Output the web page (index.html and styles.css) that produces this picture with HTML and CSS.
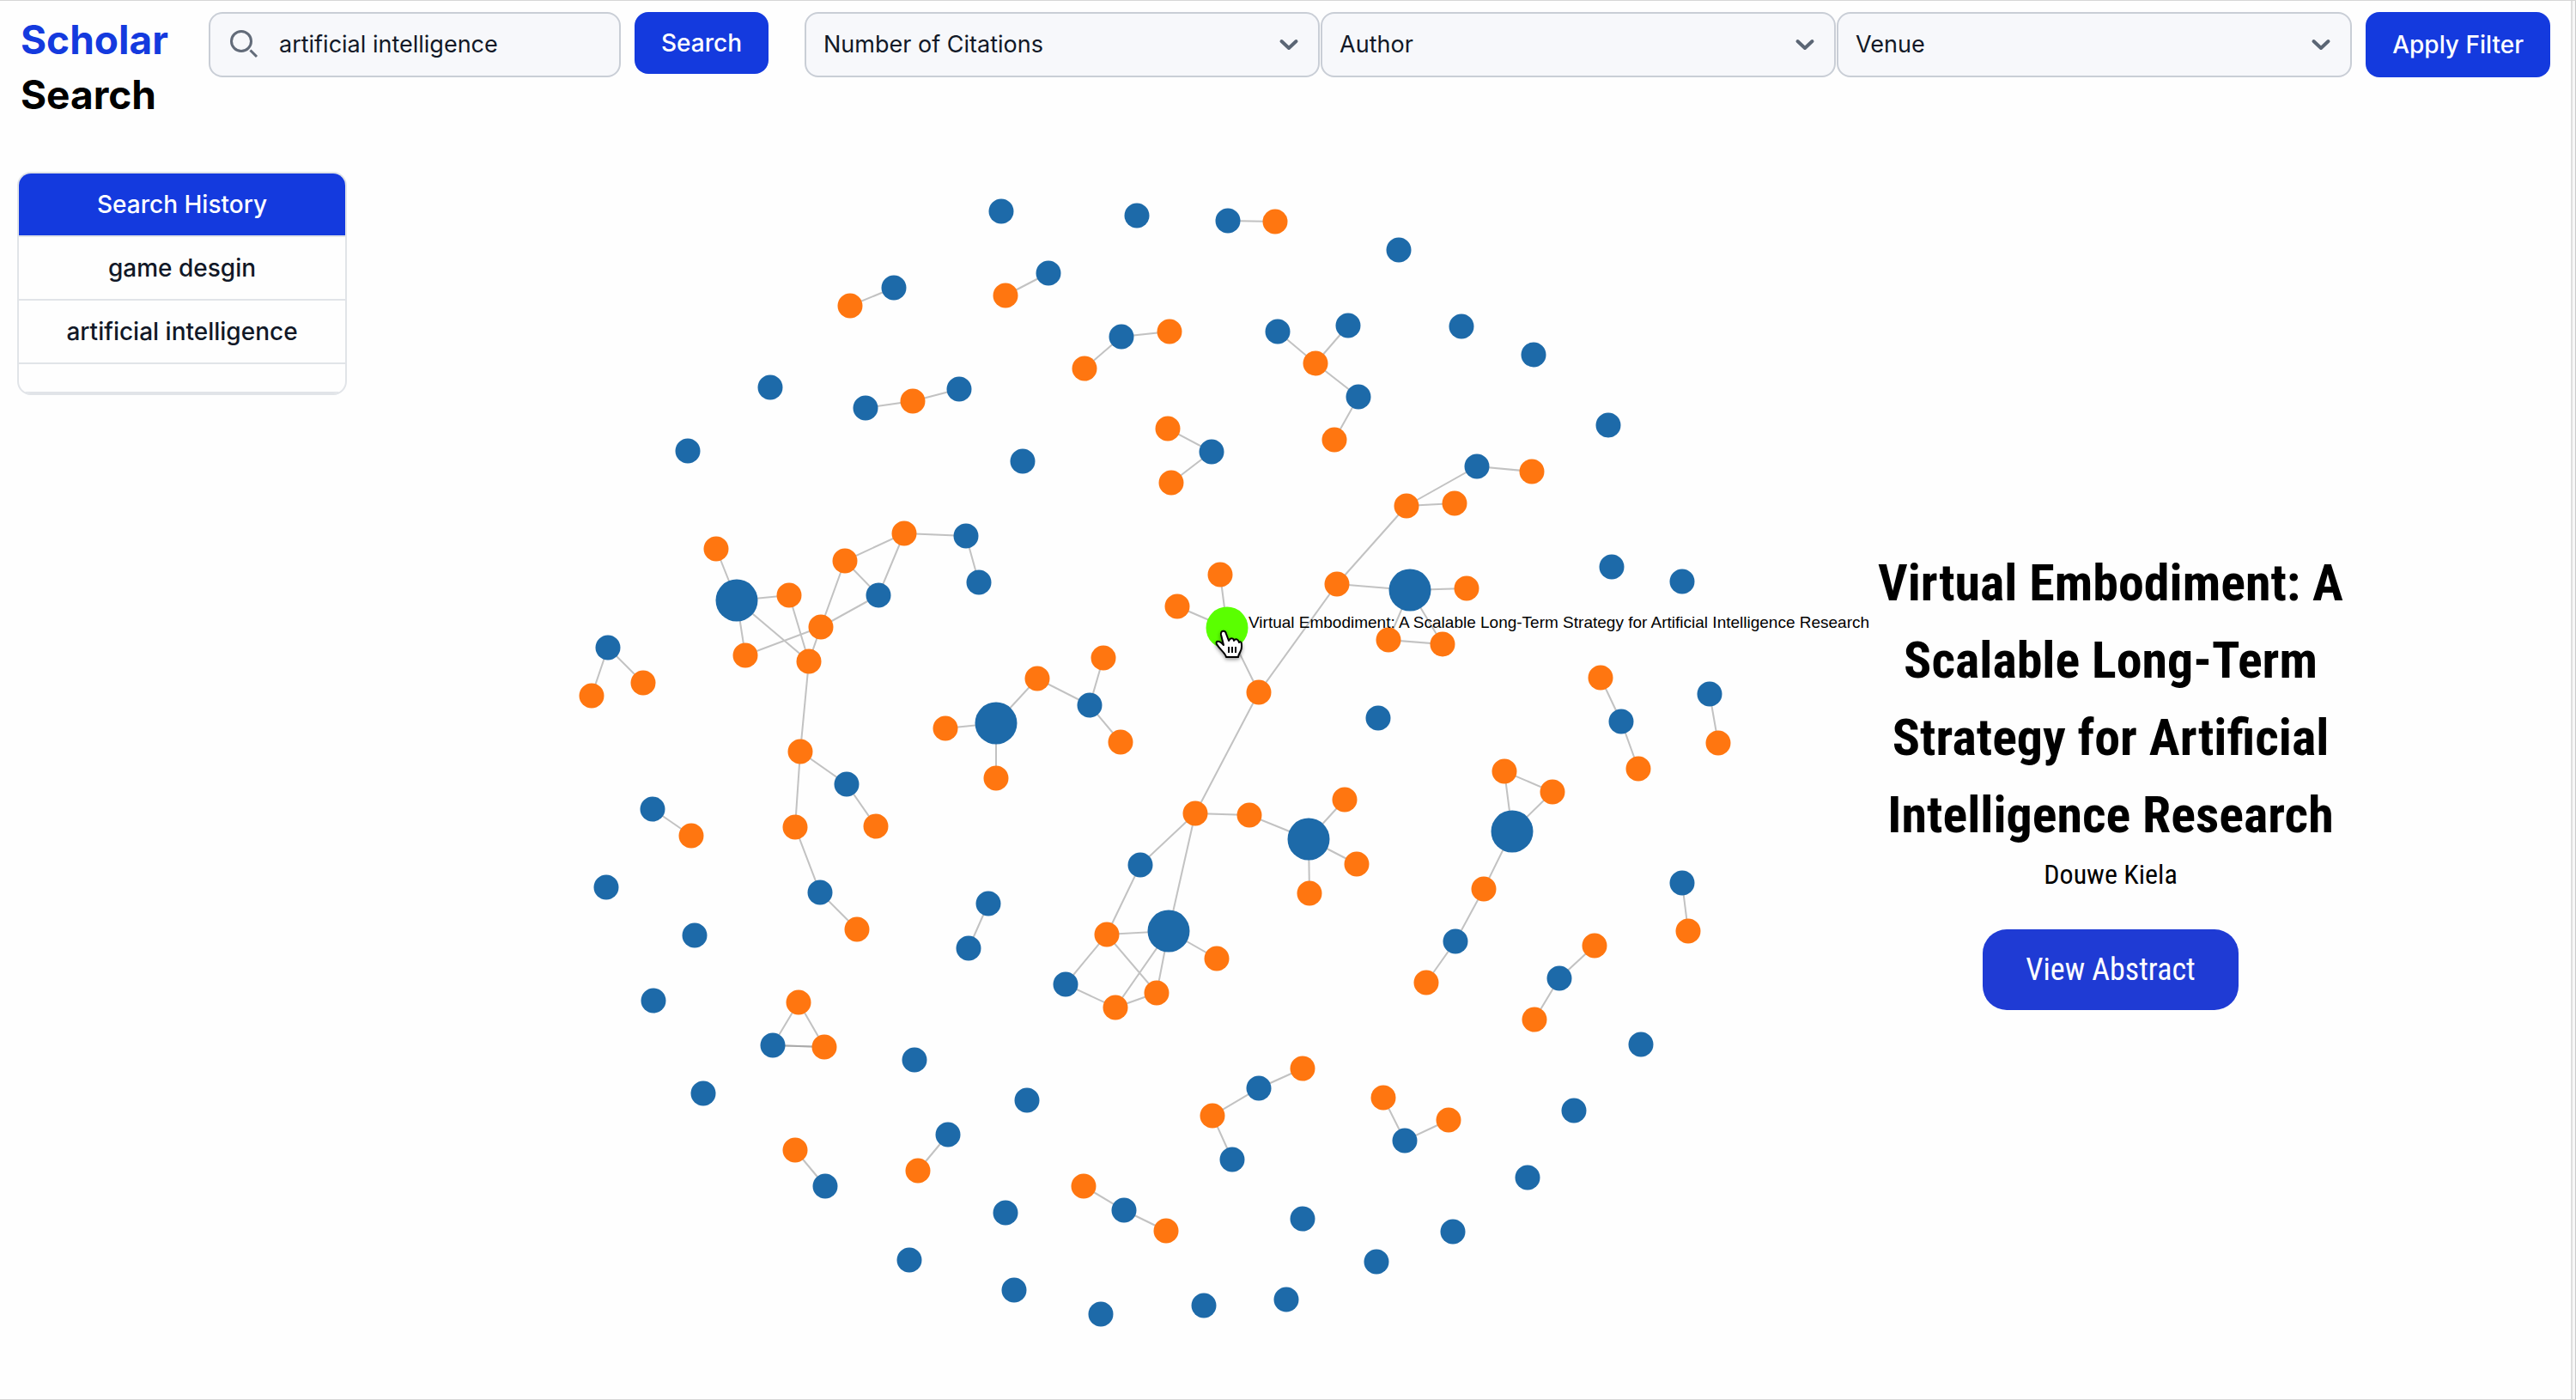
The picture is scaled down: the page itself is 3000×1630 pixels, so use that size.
FILE: index.html
```html
<!DOCTYPE html>
<html lang="en">
<head>
<meta charset="utf-8">
<title>Scholar Search</title>
<link rel="stylesheet" href="styles.css">
</head>
<body>
<div class="page">
  <header class="topbar">
    <h1 class="logo"><span class="logo-accent">Scholar</span> Search</h1>
    <form class="search">
      <div class="search-box">
        <svg class="search-icon" viewBox="0 0 40 40" aria-hidden="true"><circle cx="16" cy="16" r="11.5"/><path d="M26.500 26.500L34 34"/></svg>
        <input class="search-input" type="text" aria-label="Search papers" value="artificial intelligence">
      </div>
      <button class="btn" type="button">Search</button>
    </form>
    <form class="filters">
      <div class="filter-row">
        <div class="select-wrap">
          <select class="select" aria-label="Number of Citations"><option>Number of Citations</option></select>
          <svg class="chevron" viewBox="0 0 24 16" aria-hidden="true"><path d="M3.500 4L12 12L20.500 4"/></svg>
        </div>
        <div class="select-wrap">
          <select class="select" aria-label="Author"><option>Author</option></select>
          <svg class="chevron" viewBox="0 0 24 16" aria-hidden="true"><path d="M3.500 4L12 12L20.500 4"/></svg>
        </div>
        <div class="select-wrap">
          <select class="select" aria-label="Venue"><option>Venue</option></select>
          <svg class="chevron" viewBox="0 0 24 16" aria-hidden="true"><path d="M3.500 4L12 12L20.500 4"/></svg>
        </div>
      </div>
      <button class="btn btn-tall" type="button">Apply Filter</button>
    </form>
  </header>

  <main class="content">
    <aside class="history">
      <h2 class="history-title">Search History</h2>
      <button class="history-item" type="button">game desgin</button>
      <button class="history-item" type="button">artificial intelligence</button>
      <div class="history-empty"></div>
    </aside>

    <svg class="graph" viewBox="404 200 1777 1428" role="img" aria-label="Citation graph">
      <path class="link" d="M1430 257L1485 258M1221 318L1171 344M1041 335L990 356M1263 429L1306 392L1362 386M1488 386L1532 423L1570 379M1532 423L1582 462L1554 512M1008 475L1063 467L1117 453M1360 499L1411 526L1364 562"/>
      <path class="link" d="M834 639L858 699L919 693L942 770L858 699L868 763L956 730L984 653L1053 621L1125 624L1140 678M984 653L1023 693L1053 621M1023 693L956 730L942 770L932 875L986 913L1020 962M932 875L926 963L955 1039L998 1082"/>
      <path class="link" d="M1784 549L1720 543L1638 589L1694 586M1638 589L1557 680L1642 687L1708 685M1642 687L1617 745L1680 750L1642 687M1557 680L1466 806L1429 731L1421 669M1371 706L1429 731M1466 806L1392 947L1455 949L1524 977L1566 931M1580 1006L1524 977L1525 1040"/>
      <path class="link" d="M1392 947L1361 1084L1417 1116M1392 947L1328 1007L1289 1088L1361 1084L1299 1173L1241 1146L1289 1088L1347 1156L1361 1084M1299 1173L1347 1156"/>
      <path class="link" d="M689 810L708 754L749 795M760 942L805 973M1101 848L1160 842L1160 906M1160 842L1208 790L1269 821L1285 766M1269 821L1305 864M1151 1052L1128 1104M900 1217L930 1167L960 1219ZM926 1339L961 1381M1104 1321L1069 1363M1262 1381L1309 1409L1358 1433"/>
      <path class="link" d="M1517 1244L1466 1267L1412 1299L1435 1350M1611 1278L1636 1328L1687 1304M1864 789L1888 840L1908 895M1991 808L2001 865M1761 968L1752 898L1808 922ZL1728 1035L1695 1096L1661 1144M1959 1028L1966 1084M1857 1101L1816 1139L1787 1187"/>
      <path class="link" d="M900 1217L960 1219"/>
      <g class="paper">
        <circle cx="1166" cy="246" r="14.500"/><circle cx="1324" cy="251" r="14.500"/><circle cx="1430" cy="257" r="14.500"/><circle cx="1629" cy="291" r="14.500"/>
        <circle cx="1221" cy="318" r="14.500"/><circle cx="1041" cy="335" r="14.500"/><circle cx="1306" cy="392" r="14.500"/><circle cx="1488" cy="386" r="14.500"/>
        <circle cx="1570" cy="379" r="14.500"/><circle cx="1582" cy="462" r="14.500"/><circle cx="1702" cy="380" r="14.500"/><circle cx="1786" cy="413" r="14.500"/>
        <circle cx="1008" cy="475" r="14.500"/><circle cx="1117" cy="453" r="14.500"/><circle cx="897" cy="451" r="14.500"/><circle cx="1411" cy="526" r="14.500"/>
        <circle cx="1873" cy="495" r="14.500"/><circle cx="1720" cy="543" r="14.500"/><circle cx="1877" cy="660" r="14.500"/><circle cx="1959" cy="677" r="14.500"/>
        <circle cx="1605" cy="836" r="14.500"/><circle cx="1888" cy="840" r="14.500"/><circle cx="1991" cy="808" r="14.500"/><circle cx="1695" cy="1096" r="14.500"/>
        <circle cx="1959" cy="1028" r="14.500"/><circle cx="1816" cy="1139" r="14.500"/><circle cx="1911" cy="1216" r="14.500"/><circle cx="1833" cy="1293" r="14.500"/>
        <circle cx="1779" cy="1371" r="14.500"/><circle cx="1692" cy="1434" r="14.500"/><circle cx="1603" cy="1469" r="14.500"/><circle cx="1498" cy="1513" r="14.500"/>
        <circle cx="1402" cy="1520" r="14.500"/><circle cx="1517" cy="1419" r="14.500"/><circle cx="1466" cy="1267" r="14.500"/><circle cx="1435" cy="1350" r="14.500"/>
        <circle cx="1636" cy="1328" r="14.500"/><circle cx="801" cy="525" r="14.500"/><circle cx="1191" cy="537" r="14.500"/><circle cx="1125" cy="624" r="14.500"/>
        <circle cx="1140" cy="678" r="14.500"/><circle cx="1023" cy="693" r="14.500"/><circle cx="708" cy="754" r="14.500"/><circle cx="986" cy="913" r="14.500"/>
        <circle cx="955" cy="1039" r="14.500"/><circle cx="760" cy="942" r="14.500"/><circle cx="706" cy="1033" r="14.500"/><circle cx="809" cy="1089" r="14.500"/>
        <circle cx="1269" cy="821" r="14.500"/><circle cx="1151" cy="1052" r="14.500"/><circle cx="1128" cy="1104" r="14.500"/><circle cx="1328" cy="1007" r="14.500"/>
        <circle cx="1241" cy="1146" r="14.500"/><circle cx="761" cy="1165" r="14.500"/><circle cx="900" cy="1217" r="14.500"/><circle cx="819" cy="1273" r="14.500"/>
        <circle cx="1065" cy="1234" r="14.500"/><circle cx="1196" cy="1281" r="14.500"/><circle cx="1104" cy="1321" r="14.500"/><circle cx="961" cy="1381" r="14.500"/>
        <circle cx="1171" cy="1412" r="14.500"/><circle cx="1059" cy="1467" r="14.500"/><circle cx="1181" cy="1502" r="14.500"/><circle cx="1282" cy="1530" r="14.500"/>
        <circle cx="1309" cy="1409" r="14.500"/>
        <circle cx="858" cy="699" r="24.500"/><circle cx="1160" cy="842" r="24.500"/><circle cx="1361" cy="1084" r="24.500"/><circle cx="1524" cy="977" r="24.500"/>
        <circle cx="1642" cy="687" r="24.500"/><circle cx="1761" cy="968" r="24.500"/>
      </g>
      <g class="author-node">
        <circle cx="1485" cy="258" r="14.500"/><circle cx="1171" cy="344" r="14.500"/><circle cx="990" cy="356" r="14.500"/><circle cx="1362" cy="386" r="14.500"/>
        <circle cx="1263" cy="429" r="14.500"/><circle cx="1532" cy="423" r="14.500"/><circle cx="1063" cy="467" r="14.500"/><circle cx="1554" cy="512" r="14.500"/>
        <circle cx="1360" cy="499" r="14.500"/><circle cx="1364" cy="562" r="14.500"/><circle cx="1784" cy="549" r="14.500"/><circle cx="1638" cy="589" r="14.500"/>
        <circle cx="1694" cy="586" r="14.500"/><circle cx="1557" cy="680" r="14.500"/><circle cx="1708" cy="685" r="14.500"/><circle cx="1617" cy="745" r="14.500"/>
        <circle cx="1680" cy="750" r="14.500"/><circle cx="1421" cy="669" r="14.500"/><circle cx="1371" cy="706" r="14.500"/><circle cx="1466" cy="806" r="14.500"/>
        <circle cx="1864" cy="789" r="14.500"/><circle cx="1908" cy="895" r="14.500"/><circle cx="2001" cy="865" r="14.500"/><circle cx="1392" cy="947" r="14.500"/>
        <circle cx="1455" cy="949" r="14.500"/><circle cx="1566" cy="931" r="14.500"/><circle cx="1580" cy="1006" r="14.500"/><circle cx="1525" cy="1040" r="14.500"/>
        <circle cx="1417" cy="1116" r="14.500"/><circle cx="1752" cy="898" r="14.500"/><circle cx="1808" cy="922" r="14.500"/><circle cx="1728" cy="1035" r="14.500"/>
        <circle cx="1966" cy="1084" r="14.500"/><circle cx="1857" cy="1101" r="14.500"/><circle cx="1661" cy="1144" r="14.500"/><circle cx="1787" cy="1187" r="14.500"/>
        <circle cx="1517" cy="1244" r="14.500"/><circle cx="1412" cy="1299" r="14.500"/><circle cx="1611" cy="1278" r="14.500"/><circle cx="1687" cy="1304" r="14.500"/>
        <circle cx="1358" cy="1433" r="14.500"/><circle cx="1347" cy="1156" r="14.500"/><circle cx="834" cy="639" r="14.500"/><circle cx="919" cy="693" r="14.500"/>
        <circle cx="868" cy="763" r="14.500"/><circle cx="956" cy="730" r="14.500"/><circle cx="942" cy="770" r="14.500"/><circle cx="984" cy="653" r="14.500"/>
        <circle cx="1053" cy="621" r="14.500"/><circle cx="689" cy="810" r="14.500"/><circle cx="749" cy="795" r="14.500"/><circle cx="932" cy="875" r="14.500"/>
        <circle cx="1020" cy="962" r="14.500"/><circle cx="926" cy="963" r="14.500"/><circle cx="998" cy="1082" r="14.500"/><circle cx="805" cy="973" r="14.500"/>
        <circle cx="1101" cy="848" r="14.500"/><circle cx="1160" cy="906" r="14.500"/><circle cx="1208" cy="790" r="14.500"/><circle cx="1285" cy="766" r="14.500"/>
        <circle cx="1305" cy="864" r="14.500"/><circle cx="1289" cy="1088" r="14.500"/><circle cx="1299" cy="1173" r="14.500"/><circle cx="930" cy="1167" r="14.500"/>
        <circle cx="960" cy="1219" r="14.500"/><circle cx="1069" cy="1363" r="14.500"/><circle cx="926" cy="1339" r="14.500"/><circle cx="1262" cy="1381" r="14.500"/>
      </g>
      <circle class="selected-node" cx="1429" cy="731" r="24.500"/>
      <text class="node-label" x="1454" y="731">Virtual Embodiment: A Scalable Long-Term Strategy for Artificial Intelligence Research</text>
      <path class="pointer" d="M1422 739C1421 734 1427 733 1428 738L1431 746C1433 742 1437 743 1437 746C1439 743 1442 744 1443 748C1446 746 1446 749 1446 753C1446 759 1443 759 1442 765H1428C1427 760 1421 757 1417 750C1415 746 1420 745 1425 751Z"/>
      <path class="pointer-lines" d="M1431 753V760M1435 753V760M1439 753V760"/>
    </svg>

    <section class="detail">
      <h2 class="detail-title">Virtual Embodiment: A Scalable Long-Term Strategy for Artificial Intelligence Research</h2>
      <p class="detail-author">Douwe Kiela</p>
      <button class="detail-btn" type="button">View Abstract</button>
    </section>
  </main>
  <div class="scroll-track"></div>
</div>
</body>
</html>
```
FILE: styles.css
```css
* { box-sizing: border-box; }

body {
  margin: 0;
  background: #fefefe;
  color: #111827;
  font-family: Inter, "Liberation Sans", sans-serif;
  font-size: 28px;
  line-height: 40px;
}

h1, h2, p { margin: 0; }

button, input, select {
  font: inherit;
  color: inherit;
}

.page {
  display: grid;
  grid-template-columns: minmax(0, 1fr) 6px;
  grid-template-rows: auto 1fr;
  min-height: 100vh;
  border-top: 1px solid #d6d6d6;
  border-bottom: 1px solid #d6d6d6;
}

.scroll-track {
  grid-column: 2;
  grid-row: 1 / 3;
  border-left: 2px solid #dedede;
  border-right: 1px solid #cccccc;
  background: #f7f7f7;
}

/* Top bar */
.topbar {
  display: flex;
  align-items: flex-start;
  padding: 13px 24px 0;
}

.logo {
  display: flex;
  flex-direction: column;
  flex: 0 0 219px;
  color: #000000;
  font-size: 46px;
  line-height: 64px;
  font-weight: 700;
}

.logo-accent { color: #143ade; }

.search {
  display: flex;
  align-items: flex-start;
  gap: 16px;
  flex: 0 0 652px;
  min-width: 0;
  margin-right: 42px;
}

.search-box {
  display: flex;
  align-items: center;
  flex: 1;
  min-width: 0;
  height: 76px;
  padding: 0 20px;
  gap: 20px;
  border: 2px solid #c9ced6;
  border-radius: 16px;
  background: #f7f8fb;
}

.search-icon {
  flex: none;
  width: 40px;
  height: 40px;
  fill: none;
  stroke: #626b79;
  stroke-width: 3;
}

.search-input {
  flex: 1;
  min-width: 0;
  padding: 0;
  border: 0;
  outline: 0;
  background: transparent;
  font-size: 27px;
}

.btn {
  flex: none;
  height: 72px;
  padding: 0 31px;
  border: 0;
  border-radius: 16px;
  background: #143ade;
  color: #ffffff;
  font-weight: 500;
}

.btn-tall { height: 76px; }

.filters {
  display: flex;
  flex: 1;
  gap: 16px;
}

.filter-row {
  display: grid;
  grid-template-columns: repeat(3, 1fr);
  gap: 1px;
  flex: 1;
}

.select-wrap {
  display: grid;
  align-items: center;
}

.select {
  grid-area: 1 / 1;
  width: 100%;
  height: 76px;
  padding: 0 64px 0 20px;
  border: 2px solid #c9ced6;
  border-radius: 16px;
  background: #f7f8fb;
  font-size: 27px;
  appearance: none;
}

.chevron {
  grid-area: 1 / 1;
  justify-self: end;
  width: 24px;
  height: 16px;
  margin-right: 24px;
  fill: none;
  stroke: #5b6675;
  stroke-width: 4;
  stroke-linecap: round;
  stroke-linejoin: round;
  pointer-events: none;
}

/* Main area */
.content {
  display: grid;
  grid-template-columns: 384px minmax(0, 1fr) 554px;
  align-items: start;
  padding: 58px 259px 0 20px;
}

.history {
  overflow: hidden;
  border: 2px solid #e1e4e8;
  border-radius: 16px;
  font-weight: 500;
}

.history-title {
  padding: 16px;
  border-bottom: 2px solid #e1e4e8;
  background: #143ade;
  color: #ffffff;
  font-size: 28px;
  line-height: 40px;
  font-weight: 500;
  text-align: center;
}

.history-item {
  display: block;
  width: 100%;
  padding: 16px;
  border: 0;
  border-bottom: 2px solid #e1e4e8;
  background: transparent;
  text-align: center;
}

.history-empty {
  height: 34px;
  border-bottom: 2px solid #e1e4e8;
}

.graph {
  display: block;
  width: 100%;
  overflow: visible;
}

.link {
  fill: none;
  stroke: #999999;
  stroke-opacity: 0.6;
  stroke-width: 2;
}

.paper { fill: #1d6aa9; }
.author-node { fill: #ff7610; }
.selected-node { fill: #5aff00; }

.node-label {
  fill: #000000;
  font-family: "Liberation Sans", Arial, sans-serif;
  font-size: 19px;
}

.pointer {
  fill: #ffffff;
  stroke: #000000;
  stroke-width: 2;
  stroke-linejoin: round;
  filter: drop-shadow(0 2px 2px rgba(0, 0, 0, 0.4));
}

.pointer-lines {
  stroke: #000000;
  stroke-width: 2;
}

.detail {
  display: flex;
  flex-direction: column;
  align-items: center;
  padding-top: 434px;
  color: #000000;
  font-family: "Roboto Condensed", "Liberation Sans Narrow", Roboto, sans-serif;
  text-align: center;
}

.detail-title {
  font-size: 60px;
  line-height: 90px;
  font-weight: 700;
}

.detail-author {
  font-size: 32px;
  line-height: 48px;
}

.detail-btn {
  height: 94px;
  margin-top: 40px;
  padding: 0 50px;
  border: 0;
  border-radius: 28px;
  background: #1f3bd4;
  color: #ffffff;
  font-size: 36px;
}
```
